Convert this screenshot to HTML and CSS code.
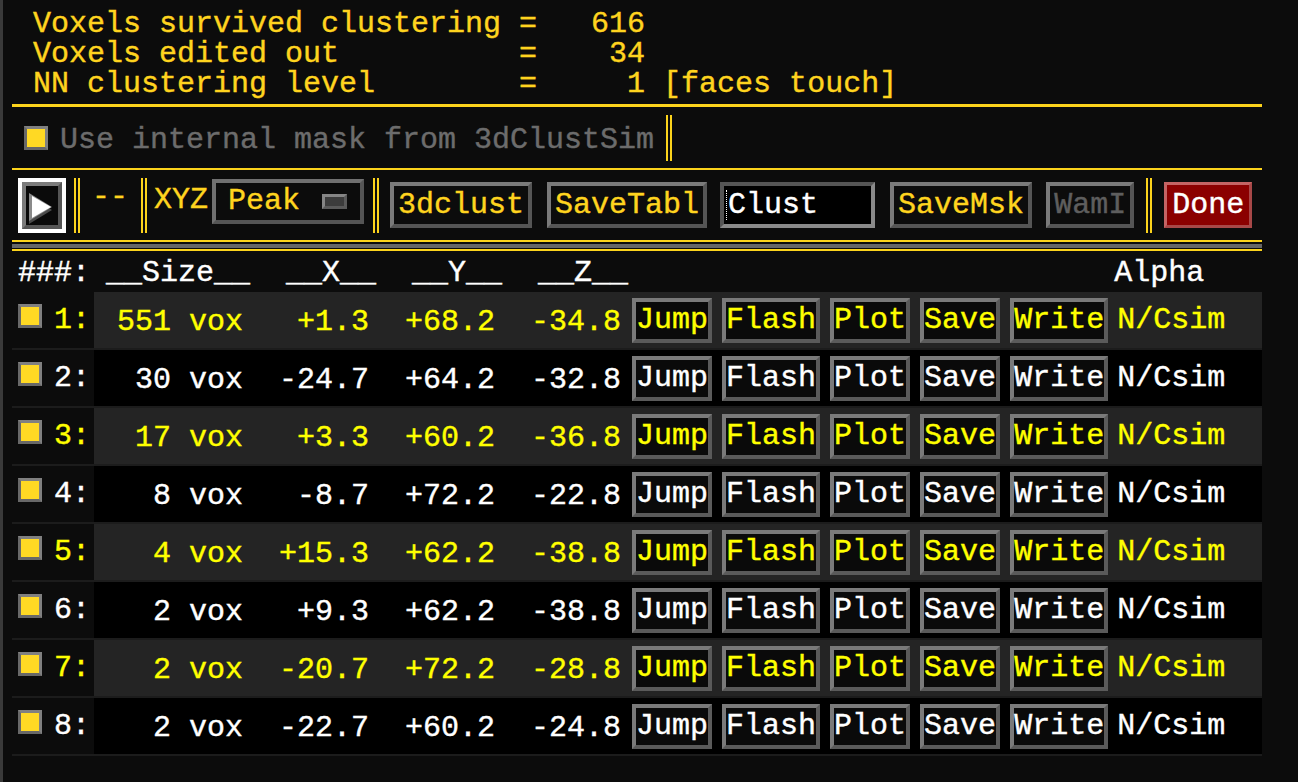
FILE: index.html
```html
<!DOCTYPE html>
<html>
<head>
<meta charset="utf-8">
<title>Clusterize</title>
<link rel="stylesheet" href="styles.css">
</head>
<body>
<div class="panel">
  <div class="info">
    <div class="line">Voxels survived clustering =   616</div>
    <div class="line">Voxels edited out          =    34</div>
    <div class="line">NN clustering level        =     1 [faces touch]</div>
  </div>

  <div class="mask-row">
    <span class="cb"></span>
    <span class="mask-text">Use internal mask from 3dClustSim</span>
    <span class="dbl dbl-mask"></span>
  </div>

  <div class="toolbar">
    <span class="play">
      <svg width="48" height="55" viewBox="0 0 48 55">
        <rect x="0" y="0" width="48" height="55" fill="#ffffff"/>
        <rect x="4" y="4" width="40" height="47" fill="#555555"/>
        <polygon points="4,4 44,4 40,8 8,8 8,47 4,51" fill="#7c7c7c"/>
        <rect x="8" y="8" width="32" height="39" fill="#0a0a0a"/>
        <polygon points="11,18 34,32 11,46" fill="#4a4a4a"/>
        <polygon points="11,15 34,29 11,43" fill="#8a8a8a"/>
        <polygon points="14,18 33,29 14,40" fill="#ffffff"/>
      </svg>
    </span>
    <span class="dbl dbl-a"></span>
    <span class="dash">--</span>
    <span class="dbl dbl-b"></span>
    <span class="xyz">XYZ</span>
    <span class="peak"><span class="peak-label">Peak</span><span class="opt-ind"></span></span>
    <span class="dbl dbl-c"></span>
    <button class="tbtn b-3d">3dclust</button>
    <button class="tbtn b-st">SaveTabl</button>
    <span class="field"><span class="cursor"></span>Clust</span>
    <button class="tbtn b-sm">SaveMsk</button>
    <button class="tbtn b-wam">WamI</button>
    <span class="dbl dbl-d"></span>
    <button class="done">Done</button>
  </div>

  <div class="sep3"><div class="sep-gray"></div></div>

  <div class="thead">
    <span class="h-num">###:</span>
    <span class="h-cols">__Size__  __X__  __Y__  __Z__                           Alpha</span>
  </div>

  <div class="rows">
    <div class="row odd">
      <div class="num"><span class="cb cb-row"></span><span class="idx">1:</span></div>
      <div class="vals">
        <span class="c size">551 vox</span><span class="c">+1.3</span><span class="c">+68.2</span><span class="c">-34.8</span>
        <button class="btn first">Jump</button><button class="btn">Flash</button><button class="btn">Plot</button><button class="btn">Save</button><button class="btn">Write</button>
        <span class="alpha">N/Csim</span>
      </div>
    </div>
    <div class="row even">
      <div class="num"><span class="cb cb-row"></span><span class="idx">2:</span></div>
      <div class="vals">
        <span class="c size">30 vox</span><span class="c">-24.7</span><span class="c">+64.2</span><span class="c">-32.8</span>
        <button class="btn first">Jump</button><button class="btn">Flash</button><button class="btn">Plot</button><button class="btn">Save</button><button class="btn">Write</button>
        <span class="alpha">N/Csim</span>
      </div>
    </div>
    <div class="row odd">
      <div class="num"><span class="cb cb-row"></span><span class="idx">3:</span></div>
      <div class="vals">
        <span class="c size">17 vox</span><span class="c">+3.3</span><span class="c">+60.2</span><span class="c">-36.8</span>
        <button class="btn first">Jump</button><button class="btn">Flash</button><button class="btn">Plot</button><button class="btn">Save</button><button class="btn">Write</button>
        <span class="alpha">N/Csim</span>
      </div>
    </div>
    <div class="row even">
      <div class="num"><span class="cb cb-row"></span><span class="idx">4:</span></div>
      <div class="vals">
        <span class="c size">8 vox</span><span class="c">-8.7</span><span class="c">+72.2</span><span class="c">-22.8</span>
        <button class="btn first">Jump</button><button class="btn">Flash</button><button class="btn">Plot</button><button class="btn">Save</button><button class="btn">Write</button>
        <span class="alpha">N/Csim</span>
      </div>
    </div>
    <div class="row odd">
      <div class="num"><span class="cb cb-row"></span><span class="idx">5:</span></div>
      <div class="vals">
        <span class="c size">4 vox</span><span class="c">+15.3</span><span class="c">+62.2</span><span class="c">-38.8</span>
        <button class="btn first">Jump</button><button class="btn">Flash</button><button class="btn">Plot</button><button class="btn">Save</button><button class="btn">Write</button>
        <span class="alpha">N/Csim</span>
      </div>
    </div>
    <div class="row even">
      <div class="num"><span class="cb cb-row"></span><span class="idx">6:</span></div>
      <div class="vals">
        <span class="c size">2 vox</span><span class="c">+9.3</span><span class="c">+62.2</span><span class="c">-38.8</span>
        <button class="btn first">Jump</button><button class="btn">Flash</button><button class="btn">Plot</button><button class="btn">Save</button><button class="btn">Write</button>
        <span class="alpha">N/Csim</span>
      </div>
    </div>
    <div class="row odd">
      <div class="num"><span class="cb cb-row"></span><span class="idx">7:</span></div>
      <div class="vals">
        <span class="c size">2 vox</span><span class="c">-20.7</span><span class="c">+72.2</span><span class="c">-28.8</span>
        <button class="btn first">Jump</button><button class="btn">Flash</button><button class="btn">Plot</button><button class="btn">Save</button><button class="btn">Write</button>
        <span class="alpha">N/Csim</span>
      </div>
    </div>
    <div class="row even">
      <div class="num"><span class="cb cb-row"></span><span class="idx">8:</span></div>
      <div class="vals">
        <span class="c size">2 vox</span><span class="c">-22.7</span><span class="c">+60.2</span><span class="c">-24.8</span>
        <button class="btn first">Jump</button><button class="btn">Flash</button><button class="btn">Plot</button><button class="btn">Save</button><button class="btn">Write</button>
        <span class="alpha">N/Csim</span>
      </div>
    </div>
  </div>
</div>
</body>
</html>
```

FILE: styles.css
```css
* { box-sizing: border-box; }
html, body { margin: 0; padding: 0; }
body {
  background: #0c0c0c;
  border-left: 3px solid #3a3a3a;
  height: 782px;
  overflow: hidden;
  font-family: "Liberation Mono", "DejaVu Sans Mono", monospace;
  font-size: 30px;
  color: #ffffff;
  -webkit-text-stroke: 0.4px currentColor;
}
.panel { margin-left: 9px; width: 1250px; }

/* info block */
.info {
  padding: 9px 0 5px 21px;
  color: #ffd41f;
  border-bottom: 3px solid #fcd31c;
}
.info .line { white-space: pre; height: 30px; line-height: 30px; }

/* checkbox */
.cb {
  display: inline-block;
  width: 24px;
  height: 24px;
  background: #ffd924;
  border: 3px solid;
  border-color: #808080 #808080 #686868 #686868;
  flex: none;
}

/* mask row */
.mask-row {
  display: flex;
  align-items: center;
  height: 63px;
  padding-left: 12px;
  border-bottom: 2px solid #fcd31c;
}
.mask-text {
  margin-left: 12px;
  margin-top: 4px;
  color: #6c6c6c;
  line-height: 30px;
  white-space: pre;
}
.dbl {
  display: inline-block;
  flex: none;
  width: 6px;
  height: 55px;
  border-left: 2px solid #fcd31c;
  border-right: 2px solid #fcd31c;
}
.dbl-mask { margin-left: 12px; height: 46px; }

/* toolbar */
.toolbar {
  display: flex;
  align-items: center;
  height: 70px;
  color: #ffd41f;
}
.play { display: block; margin-left: 6px; width: 48px; height: 55px; }
.play svg { display: block; }
.dbl-a { margin-left: 8px; }
.dash { margin-left: 12px; line-height: 30px; margin-bottom: 16px; }
.dbl-b { margin-left: 13px; }
.xyz { margin-left: 7px; line-height: 30px; margin-bottom: 10px; }
.peak {
  display: flex;
  align-items: center;
  margin-left: 4px;
  margin-bottom: 8px;
  width: 152px;
  height: 45px;
  border: 4px solid;
  border-color: #707070 #555555 #555555 #707070;
  padding-left: 12px;
  line-height: 37px;
}
.peak-label { width: 72px; }
.opt-ind {
  display: block;
  margin-left: 22px;
  width: 25px;
  height: 15px;
  border: 3px solid;
  border-color: #858585 #5a5a5a #5a5a5a #858585;
  background: #3c3c3c;
}
.dbl-c { margin-left: 9px; }

button {
  font: inherit;
  color: inherit;
  margin: 0;
  cursor: default;
  -webkit-text-stroke: 0.4px currentColor;
}
.tbtn {
  height: 46px;
  line-height: 38px;
  padding: 0 4px;
  background: #0c0c0c;
  border: 4px solid;
  border-color: #7a7a7a #555555 #555555 #7a7a7a;
  color: #ffd41f;
  white-space: pre;
}
.b-3d { margin-left: 11px; }
.b-st { margin-left: 15px; }
.b-sm { margin-left: 15px; }
.b-wam { margin-left: 14px; color: #5e5e5e; }
.field {
  display: flex;
  align-items: center;
  margin-left: 13px;
  width: 155px;
  height: 46px;
  background: #000000;
  border: 4px solid;
  border-color: #555555 #8a8a8a #8a8a8a #555555;
  padding-left: 2px;
  color: #ffffff;
  line-height: 38px;
}
.cursor {
  display: block;
  width: 1px;
  height: 30px;
  border-left: 1px dotted #ffffff;
  margin-right: 1px;
}
.dbl-d { margin-left: 12px; }
.done {
  margin-left: 12px;
  height: 46px;
  line-height: 40px;
  padding: 0 5px;
  background: #8b0000;
  border: 3px solid;
  border-color: #c46464 #a84848 #a84848 #c46464;
  color: #ffffff;
}

/* triple separator */
.sep3 {
  height: 11px;
  border-top: 2px solid #fcd31c;
  border-bottom: 2px solid #fcd31c;
  padding-top: 2px;
}
.sep-gray { height: 4px; background: #666666; }

/* table header */
.thead {
  display: flex;
  height: 41px;
  padding-top: 4px;
  line-height: 37px;
  color: #ffffff;
  white-space: pre;
}
.h-num { margin-left: 6px; }
.h-cols { margin-left: 16px; }

/* table rows */
.rows {
  display: flex;
  flex-direction: column;
  gap: 2px;
  padding-bottom: 2px;
  background: #1c1c1c;
}
.row { display: flex; height: 56px; line-height: 56px; }
.row.odd { color: #ffff00; }
.row.even { color: #ffffff; }
.num {
  display: flex;
  align-items: center;
  width: 82px;
  padding-left: 6px;
  background: #0c0c0c;
}
.cb-row { margin-bottom: 8px; }
.idx { margin-left: 12px; }
.vals {
  flex: 1;
  display: flex;
  align-items: center;
  padding-left: 5px;
}
.row.odd .vals { background: #242424; }
.row.even .vals { background: #000000; }
.c { width: 7ch; text-align: right; white-space: pre; padding-top: 3px; }
.c.size { width: 8ch; }
.btn {
  height: 45px;
  line-height: 37px;
  padding: 0;
  margin-left: 10px;
  background: #0a0a0a;
  border: 4px solid;
  border-color: #7a7a7a #5a5a5a #5a5a5a #7a7a7a;
}
.btn.first { margin-left: 11px; }
.alpha { margin-left: 9px; }
```
